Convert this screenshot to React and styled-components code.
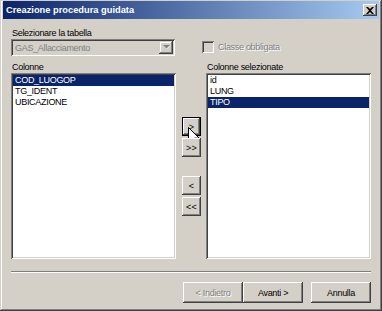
import React from 'react'
import styled, { createGlobalStyle } from 'styled-components'

const GlobalStyle = createGlobalStyle`
    html, body {
        margin: 0;
        padding: 0;
        background: #d4d0c8;
    }
    * {
        box-sizing: border-box;
    }
`

const face = '#d4d0c8'
const uiFont = `"Liberation Sans", Arial, sans-serif`

const Window = styled.div`
    width: 382px;
    height: 311px;
    padding: 1px 3px 3px 3px;
    background: ${face};
    display: flex;
    flex-direction: column;
    font-family: ${uiFont};
    font-size: 9px;
    letter-spacing: -0.3px;
    color: #000;
    box-shadow: inset -1px -1px #404040, inset 1px 1px ${face}, inset -2px -2px #808080, inset 2px 2px #fff;
`

const TitleBar = styled.div`
    height: 18px;
    display: flex;
    align-items: center;
    justify-content: space-between;
    padding: 0 2px 0 2px;
    background: linear-gradient(to right, #0a246a, #a6caf0);
`

const TitleText = styled.span`
    font-weight: 700;
    font-size: 9.3px;
    letter-spacing: 0;
    color: #fff;
    padding-left: 1px;
`

const CloseButton = styled.div`
    width: 14px;
    height: 12px;
    background: ${face};
    display: flex;
    align-items: center;
    justify-content: center;
    box-shadow: inset -1px -1px #404040, inset 1px 1px #fff, inset -2px -2px #808080;
`

const Body = styled.div`
    flex: 1;
    display: flex;
    flex-direction: column;
    padding: 8px 8px 0 8px;
`

const TopRow = styled.div`
    display: flex;
    align-items: flex-end;
`

const Field = styled.div`
    width: 165px;
    display: flex;
    flex-direction: column;
`

const Label = styled.div`
    line-height: 12px;
    height: 12px;
    padding-left: 1px;
    white-space: nowrap;
`

const Combo = styled.div`
    height: 17px;
    width: 164px;
    display: flex;
    align-items: center;
    justify-content: space-between;
    padding: 2px 2px 2px 4px;
    background: ${face};
    color: #808080;
    box-shadow: inset 1px 1px #808080, inset -1px -1px #fff, inset 2px 2px #404040, inset -2px -2px ${face};
`

const ComboArrow = styled.div`
    width: 14px;
    height: 13px;
    display: flex;
    align-items: center;
    justify-content: center;
    box-shadow: inset -1px -1px #404040, inset 1px 1px ${face}, inset -2px -2px #808080, inset 2px 2px #fff;
`

const CheckRow = styled.div`
    display: flex;
    align-items: center;
    gap: 4px;
    height: 17px;
    margin-left: 26px;
    margin-bottom: 1px;
`

const CheckBox = styled.div`
    width: 12px;
    height: 12px;
    background: ${face};
    box-shadow: inset 1px 1px #808080, inset -1px -1px #fff, inset 2px 2px #404040, inset -2px -2px ${face};
`

const Disabled = styled.span`
    color: #808080;
    text-shadow: 1px 1px #fff;
`

const Lists = styled.div`
    display: grid;
    grid-template-columns: 165px 1fr 165px;
    grid-template-rows: 12px 186px;
    margin-top: 5px;
`

const ListBox = styled.div`
    background: #fff;
    padding: 2px;
    display: flex;
    flex-direction: column;
    box-shadow: inset 1px 1px #808080, inset -1px -1px #fff, inset 2px 2px #404040, inset -2px -2px ${face};
`

const Item = styled.div`
    height: 11px;
    line-height: 11px;
    padding-left: 2px;
    background: ${p => (p.$selected ? '#0a246a' : 'transparent')};
    color: ${p => (p.$selected ? '#fff' : '#000')};
`

const Mover = styled.div`
    display: flex;
    flex-direction: column;
    align-items: center;
    padding-top: 44px;
    padding-left: 1px;
`

const Pair = styled.div`
    display: flex;
    flex-direction: column;
    gap: 2px;
    margin-bottom: 19px;
`

const SmallButton = styled.div`
    position: relative;
    width: 19px;
    height: 19px;
    display: flex;
    align-items: center;
    justify-content: center;
    font-size: 9px;
    letter-spacing: 0.3px;
    background: ${face};
    box-shadow: ${p =>
        p.$focused
            ? `inset 1px 1px #000, inset -1px -1px #000, inset -2px -2px #404040, inset 2px 2px #fff, inset -3px -3px #808080`
            : `inset -1px -1px #404040, inset 1px 1px #fff, inset -2px -2px #808080`};
`

const Pointer = styled.svg`
    position: absolute;
    left: 6px;
    top: 10px;
    pointer-events: none;
`

const Separator = styled.div`
    height: 2px;
    margin-top: 12px;
    border-top: 1px solid #808080;
    border-bottom: 1px solid #fff;
`

const Footer = styled.div`
    display: flex;
    justify-content: flex-end;
    margin-top: 9px;
`

const Button = styled.div`
    width: 60px;
    height: 21px;
    display: flex;
    align-items: center;
    justify-content: center;
    margin-left: ${p => p.$gap || 0}px;
    background: ${face};
    box-shadow: inset -1px -1px #404040, inset 1px 1px #fff, inset -2px -2px #808080, inset 2px 2px ${face};
`

const App = () => {
    return (
        <>
            <GlobalStyle />
            <Window>
                <TitleBar>
                    <TitleText>Creazione procedura guidata</TitleText>
                    <CloseButton>
                        <svg width="8" height="7" viewBox="0 0 8 7">
                            <path d="M0 0h2l2 2 2-2h2L5 3.5 8 7H6L4 5 2 7H0l3-3.5z" fill="#000" />
                        </svg>
                    </CloseButton>
                </TitleBar>
                <Body>
                    <TopRow>
                        <Field>
                            <Label>Selezionare la tabella</Label>
                            <Combo>
                                <span>GAS_Allacciamento</span>
                                <ComboArrow>
                                    <svg width="7" height="5" viewBox="0 0 7 5">
                                        <path d="M1 1h6L4 4z" fill="#fff" />
                                        <path d="M0 0h7L3.5 3.5z" fill="#808080" />
                                    </svg>
                                </ComboArrow>
                            </Combo>
                        </Field>
                        <CheckRow>
                            <CheckBox />
                            <Disabled>Classe obbligata</Disabled>
                        </CheckRow>
                    </TopRow>
                    <Lists>
                        <Label>Colonne</Label>
                        <span />
                        <Label>Colonne selezionate</Label>
                        <ListBox>
                            <Item $selected>COD_LUOGOP</Item>
                            <Item>TG_IDENT</Item>
                            <Item>UBICAZIONE</Item>
                        </ListBox>
                        <Mover>
                            <Pair>
                                <SmallButton $focused>
                                    &gt;
                                    <Pointer width="12" height="19" viewBox="0 0 12 19">
                                        <path d="M0.5 0.5v15l3.5-3.5 2.5 6 2.2-1-2.5-5.8h5z" fill="#fff" stroke="#000" strokeWidth="1" />
                                    </Pointer>
                                </SmallButton>
                                <SmallButton>&gt;&gt;</SmallButton>
                            </Pair>
                            <Pair>
                                <SmallButton>&lt;</SmallButton>
                                <SmallButton>&lt;&lt;</SmallButton>
                            </Pair>
                        </Mover>
                        <ListBox>
                            <Item>id</Item>
                            <Item>LUNG</Item>
                            <Item $selected>TIPO</Item>
                        </ListBox>
                    </Lists>
                    <Separator />
                    <Footer>
                        <Button><Disabled>&lt; Indietro</Disabled></Button>
                        <Button>Avanti &gt;</Button>
                        <Button $gap={8}>Annulla</Button>
                    </Footer>
                </Body>
            </Window>
        </>
    )
}

export default App
